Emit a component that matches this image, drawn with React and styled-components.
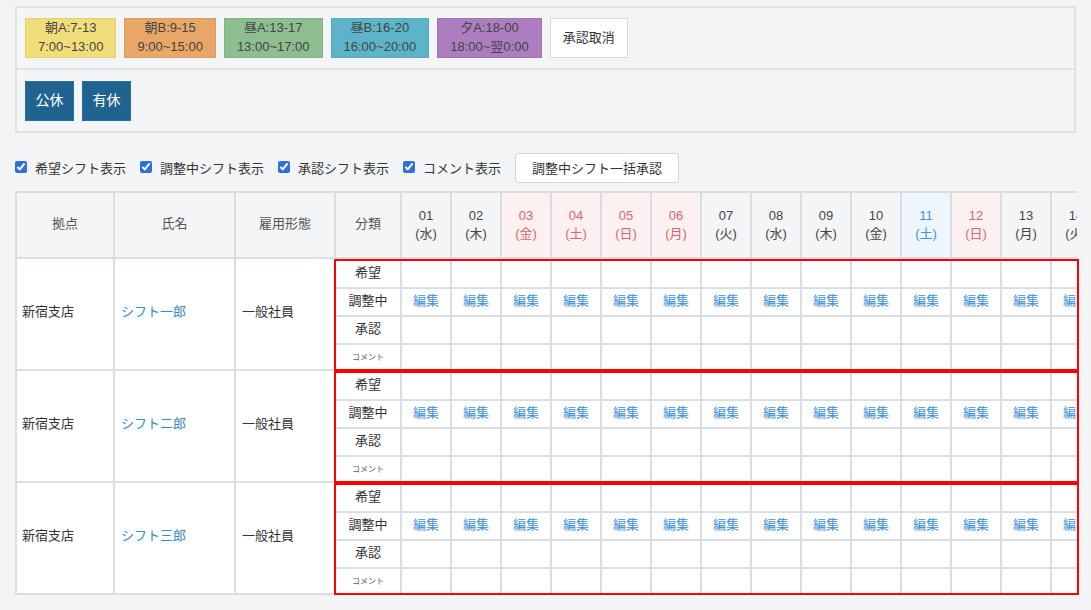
import React from 'react';
import styled, { createGlobalStyle } from 'styled-components';

const GlobalStyle = createGlobalStyle`
  body {
    margin: 0;
    background: #f3f4f6;
    font-family: "Liberation Sans", "Noto Sans CJK JP", sans-serif;
    color: #333;
  }
`;

const Page = styled.div`
  padding: 6px 0 0 15px;
`;

const Panel = styled.div`
  width: 1061px;
  box-sizing: border-box;
  border: 2px solid #dfe2e5;
  background: #f4f5f7;
`;

const PanelSection = styled.div`
  display: flex;
  gap: 8px;
  padding: ${props => props.divided ? '11px 8px 10px' : '10px 8px'};
  border-top: ${props => props.divided ? '2px solid #dfe2e5' : '0'};
`;

const ShiftButton = styled.div`
  height: 40px;
  box-sizing: border-box;
  padding: 0 12px 2px;
  display: flex;
  flex-direction: column;
  align-items: center;
  justify-content: center;
  background: ${props => props.color};
  border: 1px solid rgba(0, 0, 0, 0.06);
  font-size: 13px;
  line-height: 19px;
  color: #444;
  white-space: nowrap;
`;

const PlainButton = styled.div`
  height: 40px;
  box-sizing: border-box;
  padding: 0 12px 4px;
  display: flex;
  align-items: center;
  background: #fff;
  border: 1px solid #d6d9dc;
  font-size: 13px;
  color: #333;
`;

const LeaveButton = styled.div`
  height: 40px;
  width: 49px;
  box-sizing: border-box;
  padding-bottom: 4px;
  display: flex;
  align-items: center;
  justify-content: center;
  background: #1f6391;
  border: 1px solid #2b6f9c;
  color: #fff;
  font-size: 14px;
`;

const Toolbar = styled.div`
  display: flex;
  align-items: center;
  height: 30px;
  margin-top: 20px;
`;

const CheckLabel = styled.label`
  display: inline-flex;
  align-items: center;
  gap: 8px;
  margin-right: 14px;
  padding-bottom: 2px;
  font-size: 13px;
  color: #333;

  input {
    margin: 0;
    width: 12px;
    height: 12px;
    accent-color: #2f6fd6;
  }
`;

const BulkButton = styled.div`
  height: 30px;
  box-sizing: border-box;
  padding: 0 16px 2px;
  display: flex;
  align-items: center;
  background: #fff;
  border: 1px solid #d4d7da;
  border-radius: 3px;
  font-size: 13px;
  color: #333;
`;

const Table = styled.div`
  margin-top: 8px;
  display: flex;
  flex-direction: column;
  align-items: flex-start;
  border-top: 2px solid #dadde1;
  border-left: 2px solid #dadde1;
  width: 1062px;
  box-sizing: border-box;
`;

const HeadRow = styled.div`
  display: flex;
`;

const HeadCell = styled.div`
  width: ${props => props.w}px;
  flex: 0 0 auto;
  height: 66px;
  box-sizing: border-box;
  padding-bottom: 6px;
  border-right: 2px solid #dadde1;
  border-bottom: 2px solid #dadde1;
  background: #f4f5f7;
  display: flex;
  align-items: center;
  justify-content: center;
  font-size: 13px;
  color: #555;
`;

const DayWindow = styled.div`
  width: 741px;
  flex: 0 0 741px;
  display: flex;
  overflow: hidden;
`;

const toneBg = { red: '#fdf0f0', blue: '#eef5fc' };
const toneFg = { red: '#cf6a6c', blue: '#3d93d6' };

const DayHead = styled.div`
  flex: 0 0 50px;
  height: 66px;
  box-sizing: border-box;
  border-right: 2px solid #dadde1;
  border-bottom: 2px solid #dadde1;
  background: ${props => toneBg[props.tone] || '#f4f5f7'};
  color: ${props => toneFg[props.tone] || '#444'};
  display: flex;
  flex-direction: column;
  align-items: center;
  justify-content: center;
  font-size: 13px;
  line-height: 18px;
`;

const GroupRow = styled.div`
  display: flex;
`;

const InfoCell = styled.div`
  width: ${props => props.w}px;
  flex: 0 0 auto;
  height: 112px;
  box-sizing: border-box;
  padding: 0 0 8px ${props => props.pad}px;
  border-right: ${props => props.last ? '0' : '2px solid #dadde1'};
  border-bottom: 2px solid #dadde1;
  background: #fff;
  display: flex;
  align-items: center;
  font-size: 13px;
  color: ${props => props.link ? '#3a87c4' : '#333'};
`;

const RedBox = styled.div`
  width: 745px;
  height: 112px;
  box-sizing: border-box;
  border: 2px solid #ff0000;
  overflow: hidden;
  background: #fff;
`;

const SubRow = styled.div`
  display: flex;
  height: ${props => props.h}px;
  border-bottom: ${props => props.last ? '0' : '2px solid #dadde1'};
`;

const KindCell = styled.div`
  flex: 0 0 66px;
  box-sizing: border-box;
  padding-bottom: ${props => props.small ? '2px' : '5px'};
  border-right: 2px solid #dadde1;
  display: flex;
  align-items: center;
  justify-content: center;
  font-size: ${props => props.small ? '8px' : '13px'};
  color: ${props => props.small ? '#555' : '#333'};
`;

const DataCell = styled.div`
  flex: 0 0 50px;
  box-sizing: border-box;
  padding-bottom: 5px;
  border-right: 2px solid #dadde1;
  display: flex;
  align-items: center;
  justify-content: center;
  font-size: 13px;
  color: #3b8fd9;
`;

const shifts = [
  { name: '朝A:7-13', time: '7:00~13:00', color: '#f1de7b' },
  { name: '朝B:9-15', time: '9:00~15:00', color: '#e8a767' },
  { name: '昼A:13-17', time: '13:00~17:00', color: '#8ebd8f' },
  { name: '昼B:16-20', time: '16:00~20:00', color: '#5db4c8' },
  { name: '夕A:18-00', time: '18:00~翌0:00', color: '#ad7ebf' },
];

const days = [
  ['01', '水'], ['02', '木'], ['03', '金', 'red'], ['04', '土', 'red'],
  ['05', '日', 'red'], ['06', '月', 'red'], ['07', '火'], ['08', '水'],
  ['09', '木'], ['10', '金'], ['11', '土', 'blue'], ['12', '日', 'red'],
  ['13', '月'], ['14', '火'],
];

const kinds = [
  { label: '希望', h: 26 },
  { label: '調整中', h: 26, edit: true },
  { label: '承認', h: 26 },
  { label: 'コメント', h: 24, small: true },
];

const staff = ['シフト一郎', 'シフト二郎', 'シフト三郎'];

const checks = ['希望シフト表示', '調整中シフト表示', '承認シフト表示', 'コメント表示'];

export default function App() {
  return (
    <>
      <GlobalStyle />
      <Page>
        <Panel>
          <PanelSection>
            {shifts.map(s => (
              <ShiftButton key={s.name} color={s.color}>
                <span>{s.name}</span>
                <span>{s.time}</span>
              </ShiftButton>
            ))}
            <PlainButton>承認取消</PlainButton>
          </PanelSection>
          <PanelSection divided>
            <LeaveButton>公休</LeaveButton>
            <LeaveButton>有休</LeaveButton>
          </PanelSection>
        </Panel>

        <Toolbar>
          {checks.map(c => (
            <CheckLabel key={c}>
              <input type="checkbox" defaultChecked />
              {c}
            </CheckLabel>
          ))}
          <BulkButton>調整中シフト一括承認</BulkButton>
        </Toolbar>

        <Table>
          <HeadRow>
            <HeadCell w={98}>拠点</HeadCell>
            <HeadCell w={121}>氏名</HeadCell>
            <HeadCell w={100}>雇用形態</HeadCell>
            <DayWindow>
              <HeadCell w={66}>分類</HeadCell>
              {days.map(([d, w, tone]) => (
                <DayHead key={d} tone={tone}>
                  <span>{d}</span>
                  <span>({w})</span>
                </DayHead>
              ))}
            </DayWindow>
          </HeadRow>

          {staff.map(name => (
            <GroupRow key={name}>
              <InfoCell w={98} pad={5}>新宿支店</InfoCell>
              <InfoCell w={121} pad={6} link>{name}</InfoCell>
              <InfoCell w={98} pad={6} last>一般社員</InfoCell>
              <RedBox>
                {kinds.map((k, i) => (
                  <SubRow key={k.label} h={k.h} last={i === kinds.length - 1}>
                    <KindCell small={k.small}>{k.label}</KindCell>
                    {days.map(([d]) => (
                      <DataCell key={d}>{k.edit ? '編集' : ''}</DataCell>
                    ))}
                  </SubRow>
                ))}
              </RedBox>
            </GroupRow>
          ))}
        </Table>
      </Page>
    </>
  );
}
